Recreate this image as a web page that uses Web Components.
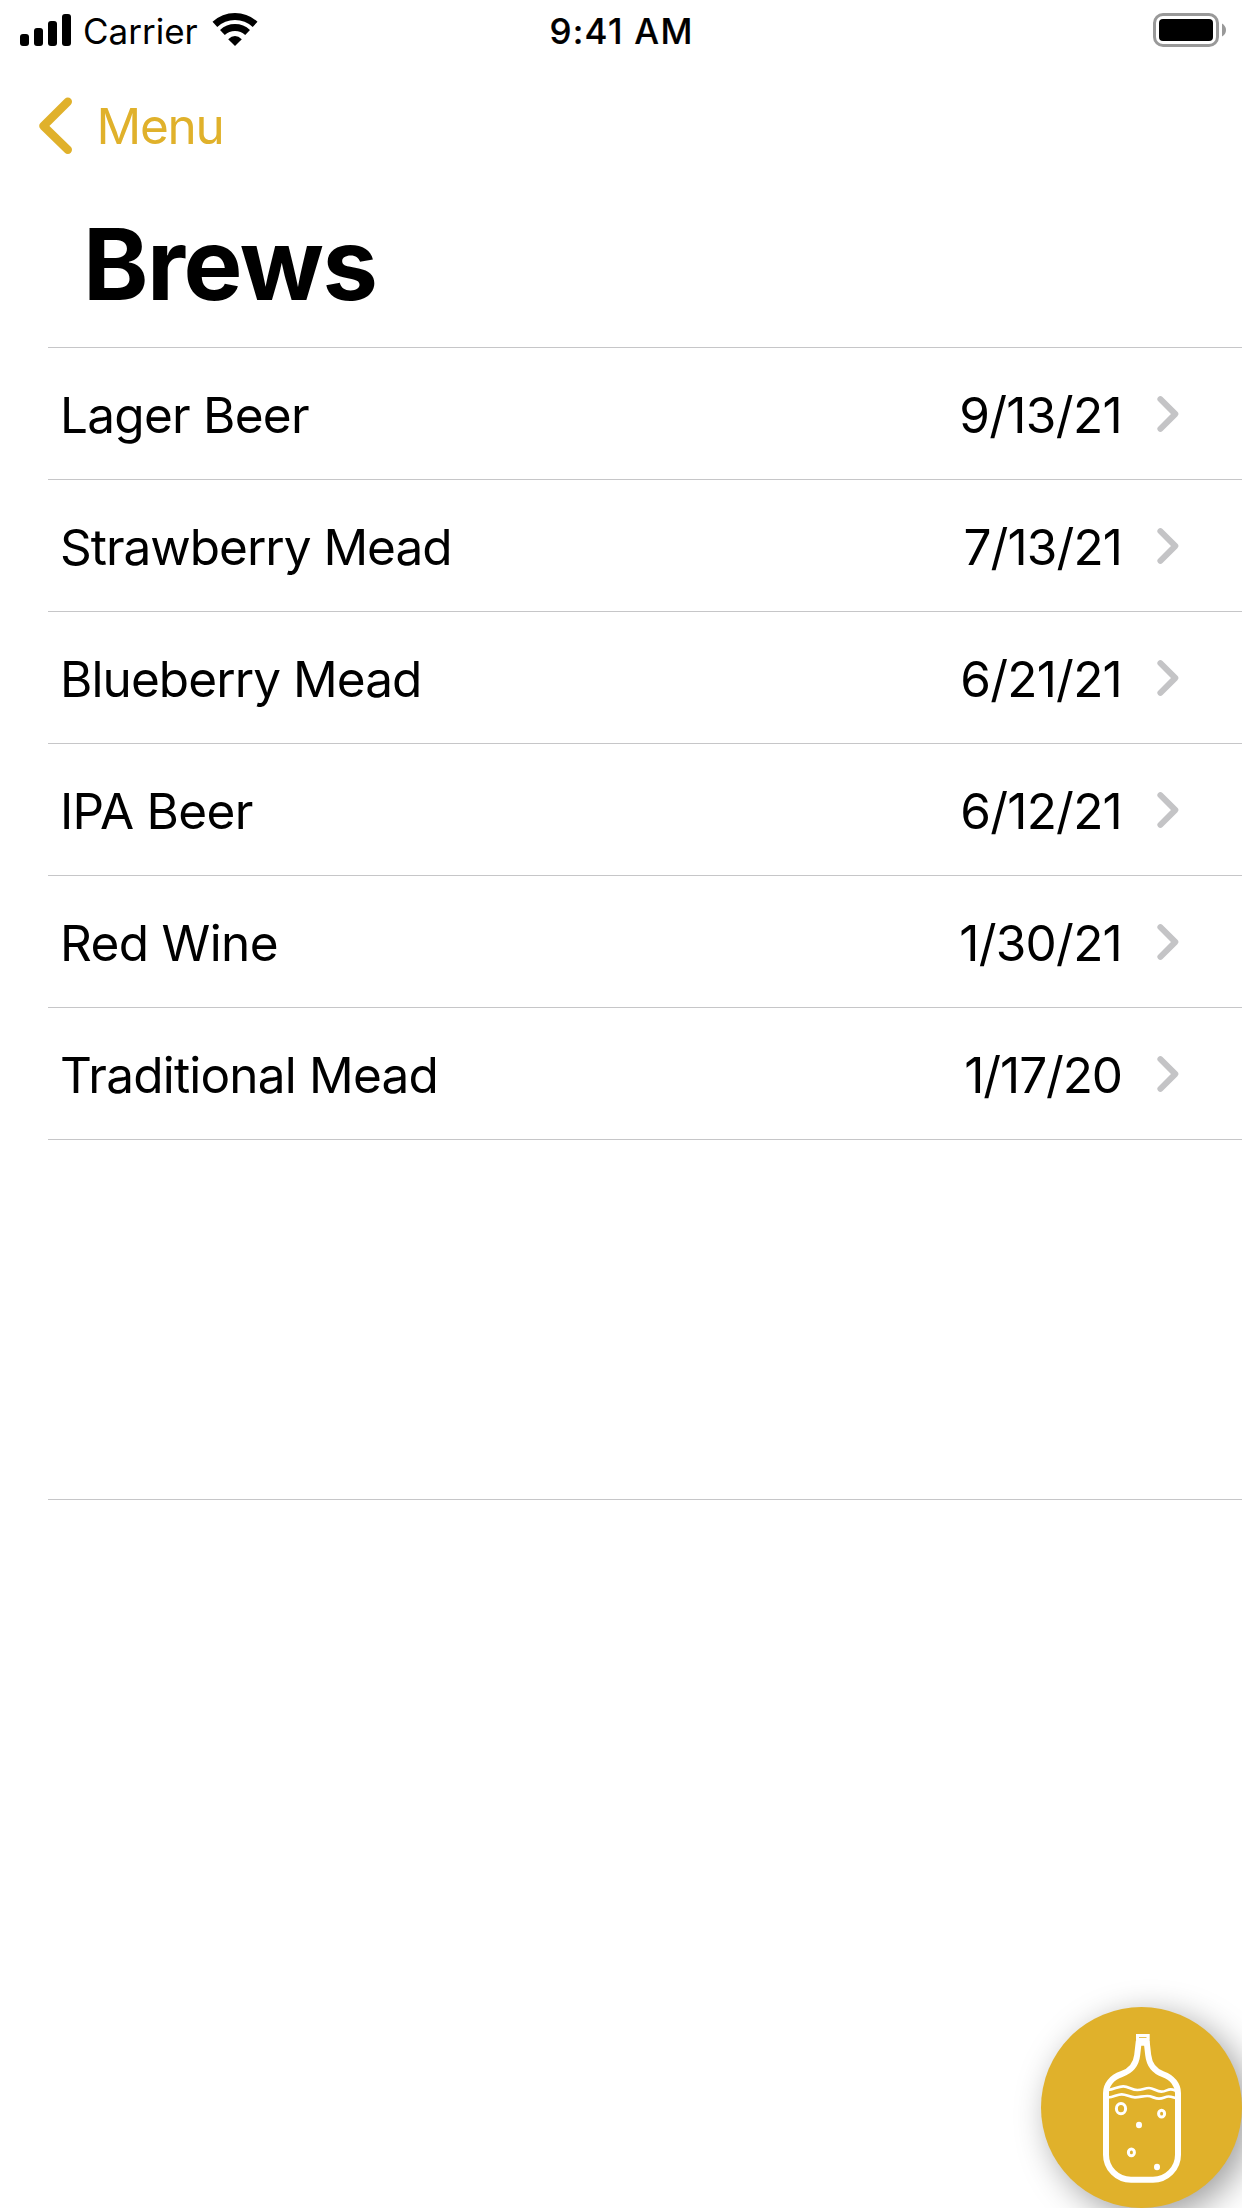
<!DOCTYPE html>
<html lang="en">
<head>
<meta charset="utf-8">
<title>Brews</title>
<style>
  html, body { margin: 0; background: #fff; }
  body { font-family: Inter, "Liberation Sans", sans-serif; color: #000; }
</style>
</head>
<body>
<brew-app></brew-app>

<template id="status-bar">
  <style>
    :host { display: grid; grid-template-columns: 1fr auto 1fr; align-items: center; height: 62px; font-size: 35px; line-height: 62px; white-space: nowrap; }
    .left { display: flex; align-items: center; padding-left: 20px; height: 62px; }
    .time { font-weight: 500; letter-spacing: 1.27px; padding-left: 1px; -webkit-text-stroke: .2px #000; }
    .right { display: flex; justify-content: flex-end; padding-right: 15px; }
    svg { display: block; flex: none; }
    .signal { margin-right: 12px; }
    .wifi { margin-left: 14px; }
  </style>
  <div class="left">
    <svg class="signal" width="51" height="62" viewBox="20 0 51 62">
      <rect x="20" y="34" width="9" height="12" rx="3"/><rect x="34" y="28" width="9" height="18" rx="3"/>
      <rect x="48" y="21" width="9" height="25" rx="3"/><rect x="62" y="14" width="9" height="32" rx="3"/>
    </svg>
    <span><slot name="carrier"></slot></span>
    <svg class="wifi" width="46" height="62" viewBox="212 0 46 62">
      <g fill="none" stroke="#000" stroke-width="7">
        <path d="M214.9 24.4A29.5 29.5 0 0 1 255.1 24.4"/><path d="M222.4 32.5A18.5 18.5 0 0 1 247.6 32.5"/>
      </g>
      <path d="M235 46L228.2 39.2Q235 32.8 241.8 39.2Z"/>
    </svg>
  </div>
  <span class="time"><slot name="time"></slot></span>
  <div class="right">
    <svg width="75" height="62" viewBox="1152 0 75 62">
      <rect x="1154.5" y="14.5" width="63" height="31" rx="8.5" fill="none" stroke="#999" stroke-width="3"/>
      <rect x="1159" y="19" width="54" height="22" rx="4"/>
      <path d="M1222 23.5Q1226 26 1226 30T1222 36.5Z" fill="#999"/>
    </svg>
  </div>
</template>

<template id="nav-bar">
  <style>
    :host { display: block; }
    .back { display: flex; align-items: center; height: 130px; padding: 0 0 2px 37px; box-sizing: border-box; color: #e0b12b; font-size: 49.5px; line-height: 60px; letter-spacing: -1.27px; gap: 21.5px; }
    svg { display: block; }
    h1 { margin: 0; padding: 0 0 11px 83px; font-size: 99px; line-height: 144px; font-weight: 700; letter-spacing: -1.4px; }
  </style>
  <div class="back">
    <svg width="38" height="60" viewBox="37 96 38 60"><path d="M67.8 101.8L43.4 125.9L67.8 149.8" fill="none" stroke="#e0b12b" stroke-width="8.4" stroke-linecap="round" stroke-linejoin="round"/></svg>
    <span><slot name="back"></slot></span>
  </div>
  <h1><slot></slot></h1>
</template>

<template id="brew-row">
  <style>
    :host { display: flex; align-items: center; box-sizing: border-box; height: 132px; padding: 3px 63px 0 12px; border-bottom: 1px solid #c6c6c8; font-size: 49.5px; line-height: 60px; white-space: nowrap; }
    .name { flex: 1; letter-spacing: var(--name-track); }
    .date { letter-spacing: var(--date-track); }
    svg { display: block; margin-left: 35px; }
  </style>
  <span class="name"><slot></slot></span>
  <span class="date"><slot name="date"></slot></span>
  <svg width="22" height="38" viewBox="0 0 22 38"><path d="M3.4 3.2L18.3 18L3.4 32.8" fill="none" stroke="#c4c4c6" stroke-width="6" stroke-linecap="round" stroke-linejoin="round"/></svg>
</template>

<template id="brew-list">
  <style>
    :host { display: block; margin-left: 48px; border-top: 1px solid #c6c6c8; }
    .empty { height: 359px; border-bottom: 1px solid #c6c6c8; }
  </style>
  <slot></slot>
  <div class="empty"></div>
</template>

<template id="brew-fab">
  <style>
    :host { position: absolute; right: 0; bottom: 0; width: 201px; height: 201px; border-radius: 50%; background: #e0b12b; box-shadow: 9px 9px 34px rgba(0,0,0,.38); }
    svg { display: block; }
  </style>
  <svg width="201" height="201" viewBox="1041 2007 201 201" fill="none" stroke="#fff">
    <path stroke-width="6" d="M1138.8 2041L1137.2 2055C1136.2 2064 1130.5 2071 1121.5 2074.2C1111.5 2077.6 1106 2085 1106 2093V2154.7A25 25 0 0 0 1131 2179.7H1153A25 25 0 0 0 1178 2154.7V2093C1178 2085 1172.5 2077.6 1163 2074.2C1154 2071 1149.2 2064 1148.2 2055L1146.6 2041"/>
    <path fill="#fff" stroke="none" d="M1136 2034H1149.7V2039L1149.2 2045.7H1136.3L1136 2039Z"/>
    <path stroke="#e0b12b" stroke-width="1" stroke-opacity=".8" d="M1139 2037.5H1146.5"/>
    <g stroke-width="2.7">
      <path d="M1108 2090C1114 2089.5 1118 2086.3 1123.3 2086.3S1132 2090 1137.3 2090S1144.5 2088 1149 2088S1156.5 2091.7 1161.3 2091.7S1167 2089.3 1170.7 2089.3S1174.5 2090.7 1177 2091"/>
      <path d="M1108 2097.5C1114 2097 1117 2094.3 1121.7 2094.3S1130 2097.3 1135 2097.3S1142.5 2096 1147.3 2096S1154.5 2098.7 1159 2098.7S1165 2096.5 1168.5 2096.5S1174 2098 1177 2098.5"/>
    </g>
    <g stroke-width="3">
      <ellipse cx="1121" cy="2108.7" rx="4.6" ry="5.1"/>
      <ellipse cx="1161.6" cy="2113.7" rx="3" ry="3.4"/>
      <ellipse cx="1131.4" cy="2152.4" rx="3" ry="3.4"/>
    </g>
    <g fill="#fff" stroke="none">
      <ellipse cx="1139" cy="2125" rx="3" ry="3.3"/><ellipse cx="1157" cy="2167" rx="3" ry="3.3"/>
    </g>
  </svg>
</template>

<template id="brew-app">
  <style>
    :host { display: block; position: relative; width: 1242px; height: 2208px; overflow: hidden; background: #fff; }
  </style>
  <status-bar><span slot="carrier">Carrier</span><span slot="time">9:41 AM</span></status-bar>
  <nav-bar><span slot="back">Menu</span>Brews</nav-bar>
  <brew-list>
    <brew-row style="--name-track:-.75px;--date-track:-.65px">Lager Beer<span slot="date">9/13/21</span></brew-row>
    <brew-row style="--name-track:-1.02px;--date-track:-.88px">Strawberry Mead<span slot="date">7/13/21</span></brew-row>
    <brew-row style="--name-track:-.92px;--date-track:-.75px">Blueberry Mead<span slot="date">6/21/21</span></brew-row>
    <brew-row style="--name-track:-.68px;--date-track:-.75px">IPA Beer<span slot="date">6/12/21</span></brew-row>
    <brew-row style="--name-track:-.65px;--date-track:-.74px">Red Wine<span slot="date">1/30/21</span></brew-row>
    <brew-row style="--name-track:-.8px;--date-track:-1.1px">Traditional Mead<span slot="date">1/17/20</span></brew-row>
  </brew-list>
  <brew-fab></brew-fab>
</template>

<script>
class TemplateElement extends HTMLElement {
  constructor() {
    super();
    this.attachShadow({ mode: 'open' })
      .append(document.getElementById(this.localName).content.cloneNode(true));
  }
}
for (const name of ['status-bar', 'nav-bar', 'brew-row', 'brew-list', 'brew-fab', 'brew-app']) {
  customElements.define(name, class extends TemplateElement {});
}
</script>
</body>
</html>
